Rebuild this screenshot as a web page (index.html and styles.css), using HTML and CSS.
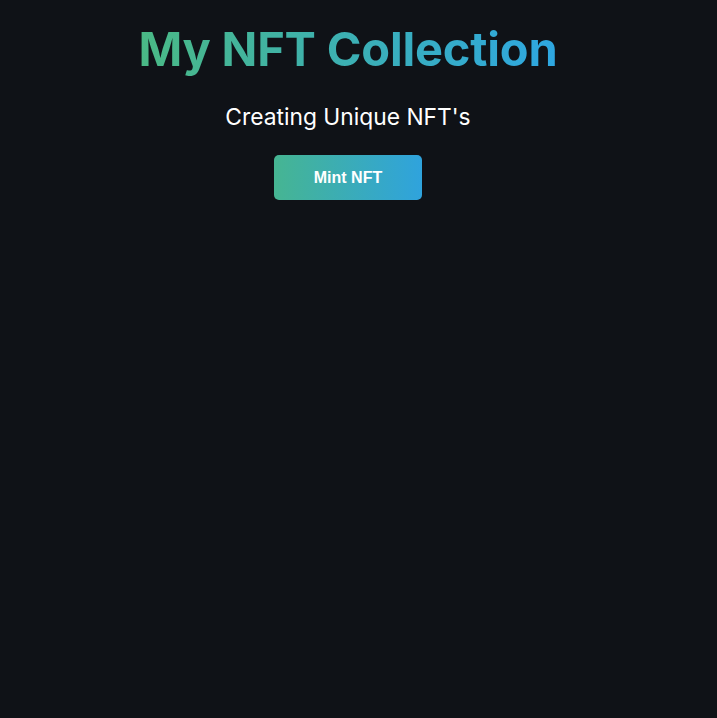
FILE: index.html
```html
<!DOCTYPE html>
<html>
<head>
<meta charset="utf-8">
<link rel="stylesheet" href="styles.css">
</head>
<body>
<main class="app">
  <h1 class="title">My NFT Collection</h1>
  <p class="subtitle">Creating Unique NFT's</p>
  <button class="mint">Mint NFT</button>
</main>
</body>
</html>
```
FILE: styles.css
```css
html, body {
  margin: 0;
  padding: 0;
  background: #0f1217;
  height: 100%;
}
.app {
  width: 696px;
  display: flex;
  flex-direction: column;
  align-items: center;
  font-family: Inter, "Noto Sans", sans-serif;
  color: #ffffff;
  padding-top: 19px;
}
.title {
  margin: 0;
  font-size: 47px;
  font-weight: 700;
  line-height: 60px;
  letter-spacing: -0.2px;
  background: linear-gradient(90deg, #4ab985 0%, #2ea7e2 100%);
  -webkit-background-clip: text;
  background-clip: text;
  color: transparent;
}
.subtitle {
  margin: 23px 0 0;
  font-size: 22.8px;
  line-height: 30px;
  font-weight: 400;
}
.mint {
  margin-top: 23px;
  width: 148px;
  height: 45px;
  border: none;
  border-radius: 5px;
  background: linear-gradient(90deg, #46b592 0%, #2fa3dd 100%);
  color: #ffffff;
  font-family: "Liberation Sans", Arial, sans-serif;
  font-weight: 700;
  font-size: 16px;
}
```
